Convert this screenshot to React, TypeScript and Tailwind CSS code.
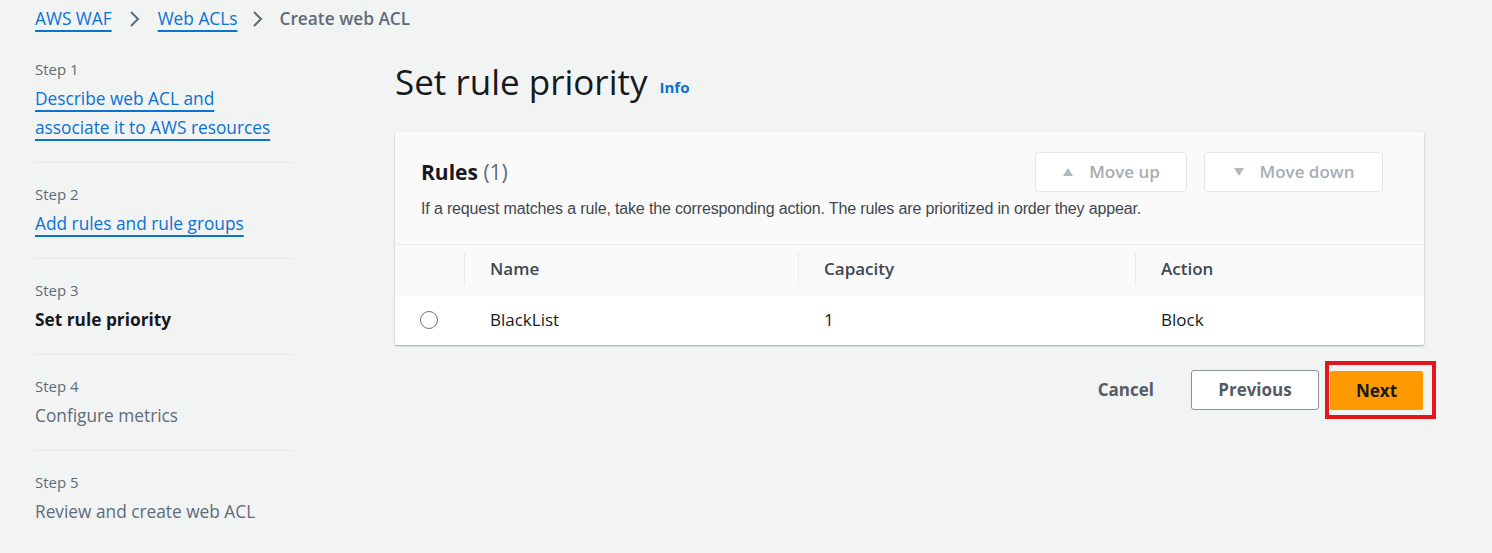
import React from "react";

const font = { fontFamily: '"Open Sans", "Noto Sans", Arial, sans-serif' };

const steps = [
  { label: "Step 1", title: ["Describe web ACL and", "associate it to AWS resources"], kind: "link" },
  { label: "Step 2", title: ["Add rules and rule groups"], kind: "link" },
  { label: "Step 3", title: ["Set rule priority"], kind: "current" },
  { label: "Step 4", title: ["Configure metrics"], kind: "disabled" },
  { label: "Step 5", title: ["Review and create web ACL"], kind: "disabled" },
];

function Chevron() {
  return (
    <svg width="14" height="18" viewBox="0 0 14 18">
      <path d="M3 2 L10 9 L3 16" fill="none" stroke="#5f6b7a" strokeWidth="2" />
    </svg>
  );
}

function Breadcrumbs() {
  return (
    <div className="flex h-[38px] items-center pl-[35px] text-[17.3px]">
      <a className="text-[#0972d3] underline decoration-[1.5px] underline-offset-[5px]">AWS WAF</a>
      <span className="mx-[16px] flex"><Chevron /></span>
      <a className="text-[#0972d3] underline decoration-[1.5px] underline-offset-[5px]">Web ACLs</a>
      <span className="mx-[14px] flex"><Chevron /></span>
      <span className="font-semibold text-[#5f6b7a]">Create web ACL</span>
    </div>
  );
}

function StepNav() {
  return (
    <nav className="w-[292px] shrink-0 pl-[35px] pt-[19px]">
      {steps.map((s, i) => (
        <div key={s.label} className={i < steps.length - 1 ? "border-b border-[#e4e6e8] pb-[20px] mb-[19px]" : ""}>
          <div className="text-[15px] leading-[24px] text-[#5f6b7a]">{s.label}</div>
          <div className="mt-[3px]">
            {s.title.map((t) => (
              <div key={t} className="text-[17.3px] leading-[29px]">
                {s.kind === "link" && (
                  <a className="text-[#0972d3] underline decoration-[1.5px] underline-offset-[5px]">{t}</a>
                )}
                {s.kind === "current" && <span className="font-bold text-[#16191f]">{t}</span>}
                {s.kind === "disabled" && <span className="text-[#5f6b7a]">{t}</span>}
              </div>
            ))}
          </div>
        </div>
      ))}
    </nav>
  );
}

function Triangle({ up }: { up: boolean }) {
  return (
    <svg width="12" height="10" viewBox="0 0 12 10">
      <path d={up ? "M6 1 L11 9 L1 9 Z" : "M1 1 L11 1 L6 9 Z"} fill="#b3b9c0" />
    </svg>
  );
}

function RulesCard() {
  return (
    <div className="w-[1029px] overflow-hidden rounded-[2px] bg-[#fafafa] shadow-[0_1px_2px_rgba(0,0,0,0.35)]">
      <div className="pl-[26px] pr-[41px] pt-[20px]">
        <div className="flex items-center justify-between">
          <h2 className="text-[21px] leading-[28px] font-bold text-[#16191f]">
            Rules <span className="font-normal text-[#5f6b7a]">(1)</span>
          </h2>
          <div className="flex gap-[17px]">
            <button className="flex h-[40px] w-[152px] items-center justify-center gap-[15px] rounded-[3px] border border-[#e4e6e8] bg-white text-[17px] font-semibold text-[#a7adb4]">
              <Triangle up /> Move up
            </button>
            <button className="flex h-[40px] w-[179px] items-center justify-center gap-[15px] rounded-[3px] border border-[#e4e6e8] bg-white text-[17px] font-semibold text-[#a7adb4]">
              <Triangle up={false} /> Move down
            </button>
          </div>
        </div>
        <p
          style={{ fontFamily: '"Liberation Sans", Arial, sans-serif' }}
          className="mt-[7px] whitespace-nowrap text-[16px] leading-[20px] tracking-[-0.15px] text-[#414750]"
        >
          If a request matches a rule, take the corresponding action. The rules are prioritized in order they appear.
        </p>
      </div>
      <div className="mt-[25px] border-t border-[#eaeded]">
        <div className="flex h-[51px] items-center pb-[4px] text-[17px] font-semibold text-[#414750]">
          <div className="h-[34px] w-[70px] border-r border-[#eaeded]" />
          <div className="flex h-[34px] w-[334px] items-center border-r border-[#eaeded] pl-[25px]">Name</div>
          <div className="flex h-[34px] w-[337px] items-center border-r border-[#eaeded] pl-[25px]">Capacity</div>
          <div className="flex h-[34px] items-center pl-[25px]">Action</div>
        </div>
        <div className="flex h-[49px] items-center pb-[2px] bg-white text-[17px] text-[#16191f]">
          <div className="flex w-[70px] justify-center pr-[3px]">
            <span className="h-[18px] w-[18px] rounded-full border-[1.5px] border-[#6b717a]" />
          </div>
          <div className="w-[334px] pl-[25px]">BlackList</div>
          <div className="w-[337px] pl-[25px]">1</div>
          <div className="pl-[25px]">Block</div>
        </div>
      </div>
    </div>
  );
}

function Footer() {
  return (
    <div className="mt-[16px] flex w-[1041px] items-center justify-end">
      <button className="mr-[37px] text-[17px] font-bold text-[#545b64]">Cancel</button>
      <button className="h-[40px] w-[128px] rounded-[3px] border border-[#8d9299] bg-white text-[17px] font-bold text-[#545b64]">
        Previous
      </button>
      <div className="ml-[6px] border-[4px] border-[#e3161b] pb-[5px] pl-px pr-[9px] pt-[6px]">
        <button className="h-[39px] w-[93px] rounded-[2px] bg-[#ff9900] text-[17px] font-bold text-[#16191f]">Next</button>
      </div>
    </div>
  );
}

export default function App() {
  return (
    <div style={font} className="h-[553px] w-[1492px] overflow-hidden bg-[#f2f3f3]">
      <Breadcrumbs />
      <div className="flex">
        <StepNav />
        <main className="pl-[103px] pt-[22px]">
          <div className="flex items-end gap-[12px]">
            <h1 className="text-[35px] leading-[44px] text-[#16191f]">Set rule priority</h1>
            <a className="mb-[6px] text-[15px] font-bold text-[#0972d3]">Info</a>
          </div>
          <div className="mt-[28px]">
            <RulesCard />
          </div>
          <Footer />
        </main>
      </div>
    </div>
  );
}
